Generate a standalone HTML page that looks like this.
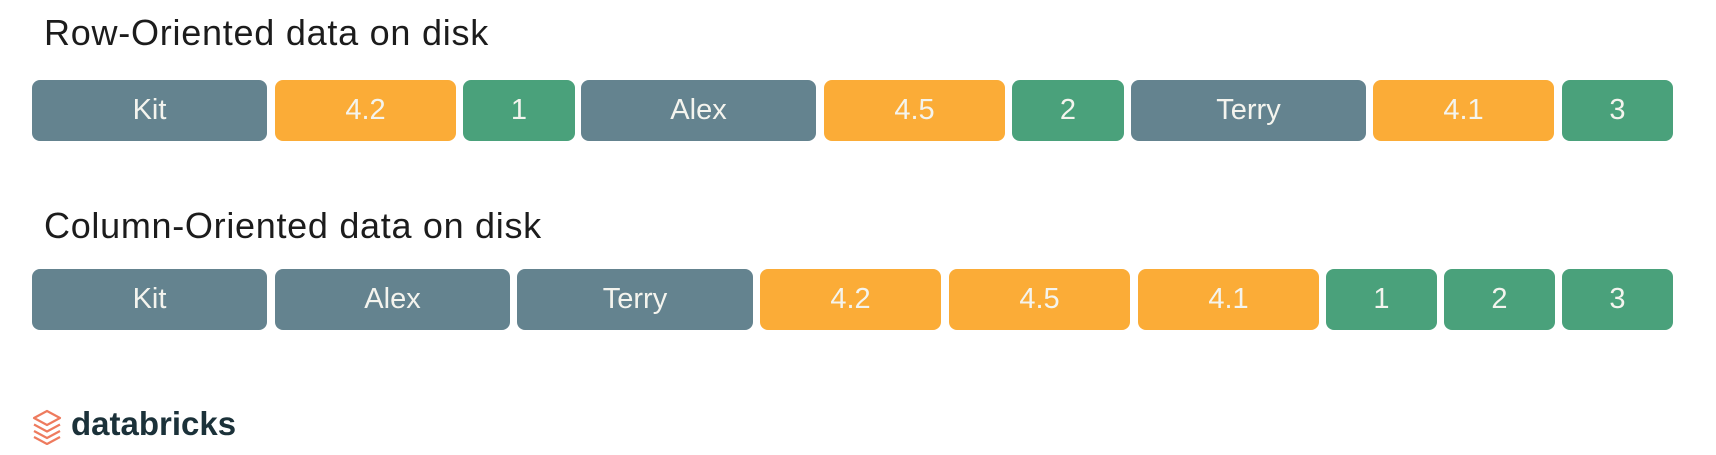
<!DOCTYPE html>
<html><head><meta charset="utf-8"><style>
html,body{margin:0;padding:0;background:#fff;width:1716px;height:455px;overflow:hidden;position:relative;font-family:"Liberation Sans",sans-serif}
.t{position:absolute;left:44px;font-size:36px;color:#1c1c1c;line-height:1;white-space:nowrap;letter-spacing:0.75px}
.b{position:absolute;height:61px;border-radius:8px;color:#f4f4ee;font-size:29px;display:flex;align-items:center;justify-content:center}
.s{background:#64838f}.o{background:#fbac37}.g{background:#4aa17b}
</style></head><body>
<div class="t" style="top:15px">Row-Oriented data on disk</div>
<div class="t" style="top:208px;letter-spacing:0.7px">Column-Oriented data on disk</div>

<div class="b s" style="left:32px;top:80px;width:235px">Kit</div>
<div class="b o" style="left:275px;top:80px;width:181px">4.2</div>
<div class="b g" style="left:463px;top:80px;width:112px">1</div>
<div class="b s" style="left:581px;top:80px;width:235px">Alex</div>
<div class="b o" style="left:824px;top:80px;width:181px">4.5</div>
<div class="b g" style="left:1012px;top:80px;width:112px">2</div>
<div class="b s" style="left:1131px;top:80px;width:235px">Terry</div>
<div class="b o" style="left:1373px;top:80px;width:181px">4.1</div>
<div class="b g" style="left:1562px;top:80px;width:111px">3</div>

<div class="b s" style="left:32px;top:269px;width:235px">Kit</div>
<div class="b s" style="left:275px;top:269px;width:235px">Alex</div>
<div class="b s" style="left:517px;top:269px;width:236px">Terry</div>
<div class="b o" style="left:760px;top:269px;width:181px">4.2</div>
<div class="b o" style="left:949px;top:269px;width:181px">4.5</div>
<div class="b o" style="left:1138px;top:269px;width:181px">4.1</div>
<div class="b g" style="left:1326px;top:269px;width:111px">1</div>
<div class="b g" style="left:1444px;top:269px;width:111px">2</div>
<div class="b g" style="left:1562px;top:269px;width:111px">3</div>

<svg style="position:absolute;left:32px;top:409px" width="30" height="36" viewBox="0 0 30 36">
<g fill="none" stroke="#ee7b5e" stroke-width="2.2" stroke-linejoin="round">
<path d="M2 9 L15 2 L28 9 L15 16 Z"/>
<path d="M2 15.5 L15 22.5 L28 15.5"/>
<path d="M2 22 L15 29 L28 22"/>
<path d="M2 28 L15 35 L28 28"/>
</g></svg>
<div style="position:absolute;left:71px;top:405px;font-size:33px;font-weight:bold;color:#1b3139;letter-spacing:0px">databricks</div>
</body></html>
